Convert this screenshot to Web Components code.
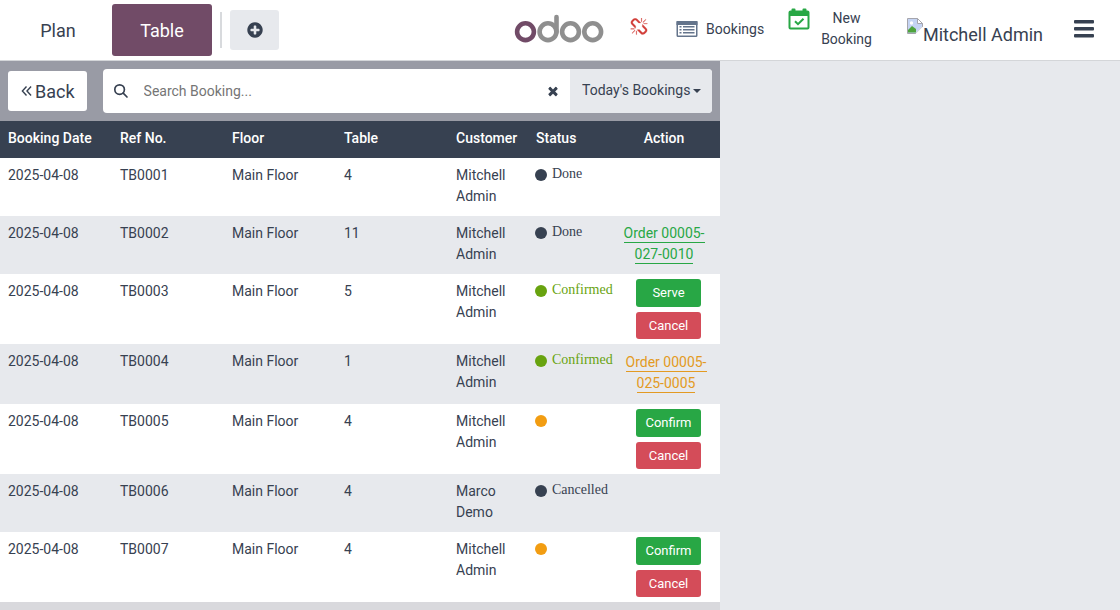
<!DOCTYPE html>
<html lang="en">
<head>
  <meta charset="utf-8">
  <meta name="viewport" content="width=device-width, initial-scale=1">
  <title>Table Bookings</title>
  <style>
    :root {
      --ink: #374151;
      --muted-bg: #e7e9ed;
      --brand: #714b67;
      --success: #28a745;
      --danger: #d44c59;
      --warning: #f29d12;
      --confirmed: #68a30f;
    }
    body {
      margin: 0;
      min-height: 100vh;
      font-family: Roboto, "Liberation Sans", sans-serif;
      font-size: 14px;
      line-height: 21px;
      color: var(--ink);
      background-color: var(--muted-bg);
    }
  </style>
</head>
<body>
  <booking-app></booking-app>

  <script>
    const icons = {
      plus: ['0 0 1792 1792', '<path d="M1344 960v-128q0-26-19-45t-45-19h-256v-256q0-26-19-45t-45-19h-128q-26 0-45 19t-19 45v256h-256q-26 0-45 19t-19 45v128q0 26 19 45t45 19h256v256q0 26 19 45t45 19h128q26 0 45-19t19-45v-256h256q26 0 45-19t19-45zM1664 896q0 209-103 385.5t-279.5 279.5-385.5 103-385.5-103-279.5-279.5-103-385.5 103-385.5 279.5-279.5 385.5-103 385.5 103 279.5 279.5 103 385.5z"/>'],
      times: ['0 0 1792 1792', '<path d="M1490 1322q0 40-28 68l-136 136q-28 28-68 28t-68-28l-294-294-294 294q-28 28-68 28t-68-28l-136-136q-28-28-28-68t28-68l294-294-294-294q-28-28-28-68t28-68l136-136q28-28 68-28t68 28l294 294 294-294q28-28 68-28t68 28l136 136q28 28 28 68t-28 68l-294 294 294 294q28 28 28 68z"/>'],
      unlink: ['0 0 1792 1792', '<path d="M503 1271l-256 256q-10 9-23 9-12 0-23-9-9-10-9-23t9-23l256-256q10-9 23-9t23 9q9 10 9 23t-9 23zm169 41v320q0 14-9 23t-23 9-23-9-9-23v-320q0-14 9-23t23-9 23 9 9 23zm-224-224q0 14-9 23t-23 9h-320q-14 0-23-9t-9-23 9-23 23-9h320q14 0 23 9t9 23zm1264 128q0 120-85 203l-147 146q-83 83-203 83-121 0-204-85l-334-335q-21-21-42-56l239-18 273 274q28 28 68 27.5t68-27.5l147-146q28-28 28-67 0-40-28-68l-274-275 18-239q35 21 56 42l336 336q84 86 84 204zm-617-724l-239 18-273-274q-28-28-68-28-39 0-68 27l-147 146q-28 28-28 67 0 40 28 68l274 274-18 240q-35-21-56-42l-336-336q-84-86-84-204 0-120 85-203l147-146q83-83 203-83 121 0 204 85l334 335q21 21 42 56zm633 84q0 14-9 23t-23 9h-320q-14 0-23-9t-9-23 9-23 23-9h320q14 0 23 9t9 23zm-544-544v320q0 14-9 23t-23 9-23-9-9-23v-320q0-14 9-23t23-9 23 9 9 23zm407 151l-256 256q-11 9-23 9t-23-9q-9-10-9-23t9-23l256-256q10-9 23-9t23 9q9 10 9 23t-9 23z" stroke="currentColor" stroke-width="20"/>'],
      search: ['0 0 16 16', '<g fill="none" stroke="currentColor" stroke-width="1.700" stroke-linecap="round"><circle cx="6.600" cy="6.600" r="4.800"/><path d="M10.200 10.200L14 14"/></g>'],
      back: ['0 0 12 12', '<path d="M6 1L1.500 6L6 11M11 1L6.500 6L11 11" fill="none" stroke="currentColor" stroke-width="1.500"/>'],
      bars: ['0 0 20 18', '<rect width="20" height="3.400" rx="1"/><rect y="7" width="20" height="3.400" rx="1"/><rect y="14" width="20" height="3.400" rx="1"/>'],
      list: ['0 0 22 18', '<path fill-rule="evenodd" d="M2 1h18a1.500 1.500 0 0 1 1.500 1.500v13a1.500 1.500 0 0 1-1.500 1.500h-18a1.500 1.500 0 0 1-1.500-1.500v-13a1.500 1.500 0 0 1 1.500-1.500zM2 5v10.500h18V5z"/><path d="M.5 1h21v4h-21zM3.500 6h2v1.500h-2zM7 6h11.500v1.500H7zM3.500 9h2v1.500h-2zM7 9h11.500v1.500H7zM3.500 12h2v1.500h-2zM7 12h11.500v1.500H7z"/>'],
      calendar: ['0 0 22 22', '<path fill-rule="evenodd" d="M2.500 2.500h1V1.500a1 1 0 0 1 1-1h2a1 1 0 0 1 1 1v1h7v-1a1 1 0 0 1 1-1h2a1 1 0 0 1 1 1v1h1a2 2 0 0 1 2 2v15a2 2 0 0 1-2 2h-17a2 2 0 0 1-2-2v-15a2 2 0 0 1 2-2zM2.500 8v11.500h17V8z"/><path d="M7 13.200l3 3 5.500-5.500" fill="none" stroke="currentColor" stroke-width="2"/>'],
      caret: ['0 0 8 4', '<path d="M0 0h8L4 4z"/>'],
      broken: ['0 0 16 16', '<path d="M.5 .5h10l5 5V9L9 15.500H.5z" fill="#fff" stroke="#a5a5ad"/><path d="M1 1h9.500v4.500H15v3L8.500 15H1z" fill="#c5d4f3"/><path d="M1 14.500V12l4-4 4 3v3.500z" fill="#4fa33c"/><circle cx="4.500" cy="5" r="1.700" fill="#fff"/><path d="M10.500 .5v5h5z" fill="#fff" stroke="#a5a5ad"/><path d="M16 8.500L8.500 16H16z" fill="#fff"/>'],
      odoo: ['0 0 90 30', '<g fill="none" stroke="#8f8f8f" stroke-width="4.600"><circle cx="11.500" cy="17.700" r="8.400" stroke="#714b67"/><circle cx="34" cy="17.700" r="8.400"/><path d="M42.500 18V3" stroke-linecap="round"/><circle cx="56.500" cy="17.700" r="8.400"/><circle cx="78.700" cy="17.700" r="8.400"/></g>']
    };

    class UiIcon extends HTMLElement {
      constructor() {
        super();
        this.attachShadow({ mode: 'open' });
      }

      connectedCallback() {
        const [viewBox, shapes] = icons[this.getAttribute('name')];
        this.shadowRoot.innerHTML = `
          <style>
            :host {
              display: inline-block;
              flex: none;
              width: 16px;
              height: 16px;
            }
            svg {
              display: block;
              width: 100%;
              height: 100%;
              fill: currentColor;
            }
          </style>
          <svg viewBox="${viewBox}" aria-hidden="true">${shapes}</svg>
        `;
      }
    }

    class AppHeader extends HTMLElement {
      constructor() {
        super();
        this.attachShadow({ mode: 'open' });
      }

      connectedCallback() {
        this.shadowRoot.innerHTML = `
          <style>
            :host {
              display: block;
              background-color: #fff;
              border-bottom: 1px solid #d4d6d9;
            }
            header, nav, .right, .item {
              display: flex;
              align-items: center;
            }
            header {
              justify-content: space-between;
              height: 60px;
              padding: 0 26px 0 8px;
            }
            nav {
              gap: 4px;
            }
            .right {
              padding-bottom: 2px;
            }
            button {
              display: flex;
              align-items: center;
              justify-content: center;
              padding: 0;
              border: none;
              border-radius: 3px;
              font: inherit;
              color: inherit;
              background: none;
              cursor: pointer;
            }
            .tab {
              width: 100px;
              height: 52px;
              font-size: 18px;
            }
            .tab.active {
              color: #fff;
              background-color: var(--brand);
            }
            .divider {
              width: 2px;
              height: 36px;
              margin: 0 4px;
              background-color: #d8dadd;
            }
            .add {
              width: 49px;
              height: 40px;
              background-color: var(--muted-bg);
            }
            .add ui-icon {
              width: 18px;
              height: 18px;
            }
            .logo {
              width: 90px;
              height: 30px;
              margin-right: 26px;
            }
            .unlink {
              width: 18px;
              height: 18px;
              margin: 0 28px 4px 0;
              color: #d23f3a;
            }
            .item {
              gap: 8px;
              margin-right: 24px;
              font-size: 14px;
            }
            .item.list ui-icon {
              width: 22px;
              height: 18px;
              color: #64748b;
            }
            .item.new {
              align-items: flex-start;
              gap: 11px;
              margin-right: 35px;
            }
            .item.new span {
              width: min-content;
            }
            .item.new ui-icon {
              width: 22px;
              height: 22px;
              color: var(--success);
            }
            .user {
              display: flex;
              margin: 10px 31px 0 0;
              font-size: 18px;
            }
            .user ui-icon {
              margin-top: -6px;
            }
            .menu ui-icon {
              width: 20px;
              height: 18px;
            }
          </style>
          <header>
            <nav>
              <button class="tab">Plan</button>
              <button class="tab active">Table</button>
              <span class="divider"></span>
              <button class="add" aria-label="Add"><ui-icon name="plus"></ui-icon></button>
            </nav>
            <div class="right">
              <ui-icon class="logo" name="odoo"></ui-icon>
              <ui-icon class="unlink" name="unlink"></ui-icon>
              <button class="item list"><ui-icon name="list"></ui-icon>Bookings</button>
              <button class="item new"><ui-icon name="calendar"></ui-icon><span>New Booking</span></button>
              <span class="user"><ui-icon name="broken"></ui-icon>Mitchell Admin</span>
              <button class="menu" aria-label="Menu"><ui-icon name="bars"></ui-icon></button>
            </div>
          </header>
        `;
      }
    }

    class SearchBar extends HTMLElement {
      constructor() {
        super();
        this.attachShadow({ mode: 'open' });
      }

      connectedCallback() {
        this.render();
        const input = this.shadowRoot.querySelector('input');
        this.shadowRoot.querySelector('.clear').addEventListener('click', () => {
          input.value = '';
          input.focus();
        });
      }

      render() {
        this.shadowRoot.innerHTML = `
          <style>
            :host {
              display: flex;
              align-items: center;
              gap: 16px;
              padding: 8px;
              background-color: #999ba5;
            }
            button, input, select {
              border: none;
              font: inherit;
              color: inherit;
              background: none;
            }
            .back {
              display: flex;
              align-items: center;
              gap: 3px;
              height: 40px;
              padding: 0 12px 0 13px;
              border-radius: 3px;
              font-size: 18px;
              background-color: #fff;
            }
            .back ui-icon {
              width: 11px;
              height: 12px;
            }
            .box {
              display: flex;
              flex: 1;
              align-items: center;
              height: 44px;
              border-radius: 4px;
              overflow: hidden;
              background-color: #fff;
            }
            label {
              display: flex;
              padding: 0 15px 0 10px;
            }
            input {
              flex: 1;
              min-width: 0;
              height: 100%;
              padding: 0;
              outline: none;
            }
            input::placeholder {
              color: #757575;
            }
            .clear {
              display: flex;
              padding: 0 10px;
            }
            .clear ui-icon {
              width: 14px;
              height: 14px;
            }
            .filter {
              position: relative;
              height: 100%;
              background-color: var(--muted-bg);
            }
            select {
              appearance: none;
              height: 100%;
              padding: 0 21px 2px 12px;
            }
            .filter ui-icon {
              position: absolute;
              top: 20px;
              right: 11px;
              width: 8px;
              height: 4px;
              pointer-events: none;
            }
          </style>
          <button class="back"><ui-icon name="back"></ui-icon>Back</button>
          <div class="box">
            <label for="search"><ui-icon name="search"></ui-icon></label>
            <input id="search" type="text" placeholder="Search Booking..." aria-label="Search Booking">
            <button class="clear" aria-label="Clear"><ui-icon name="times"></ui-icon></button>
            <div class="filter">
              <select aria-label="Filter bookings">
                <option>Today's Bookings</option>
                <option>All Bookings</option>
              </select>
              <ui-icon name="caret"></ui-icon>
            </div>
          </div>
        `;
      }
    }

    class BookingStatus extends HTMLElement {
      constructor() {
        super();
        this.attachShadow({ mode: 'open' });
      }

      connectedCallback() {
        this.shadowRoot.innerHTML = `
          <style>
            :host {
              display: flex;
              align-items: center;
              gap: 5px;
              height: 18px;
              margin: 1px 0 0 -1px;
              font-family: "Liberation Serif", serif;
              line-height: 15px;
              white-space: nowrap;
              color: var(--ink);
            }
            :host([state="confirmed"]) {
              color: var(--confirmed);
            }
            :host([state="pending"]) {
              color: var(--warning);
            }
            .dot {
              flex: none;
              width: 12px;
              height: 12px;
              border-radius: 50%;
              background-color: currentColor;
            }
            .text {
              align-self: flex-start;
            }
          </style>
          <span class="dot"></span><span class="text"><slot></slot></span>
        `;
      }
    }

    class BookingActions extends HTMLElement {
      constructor() {
        super();
        this.attachShadow({ mode: 'open' });
      }

      connectedCallback() {
        this.shadowRoot.innerHTML = `
          <style>
            :host {
              display: flex;
              flex-direction: column;
              gap: 5px;
              width: 65px;
              margin: -2px 11px -4px auto;
            }
            button {
              height: 28px;
              padding: 0 0 1px;
              border: none;
              border-radius: 3px;
              font: inherit;
              font-size: 13px;
              color: #fff;
              background-color: var(--success);
              cursor: pointer;
            }
            .cancel {
              height: 27px;
              background-color: var(--danger);
            }
          </style>
          <button><slot></slot></button>
          <button class="cancel">Cancel</button>
        `;
      }
    }

    const bookings = [
      { ref: 'TB0001', table: '4', customer: 'Mitchell Admin', state: 'done', status: 'Done' },
      { ref: 'TB0002', table: '11', customer: 'Mitchell Admin', state: 'done', status: 'Done', order: 'Order 00005-027-0010' },
      { ref: 'TB0003', table: '5', customer: 'Mitchell Admin', state: 'confirmed', status: 'Confirmed', action: 'Serve' },
      { ref: 'TB0004', table: '1', customer: 'Mitchell Admin', state: 'confirmed', status: 'Confirmed', order: 'Order 00005-025-0005', open: true },
      { ref: 'TB0005', table: '4', customer: 'Mitchell Admin', state: 'pending', status: '', action: 'Confirm' },
      { ref: 'TB0006', table: '4', customer: 'Marco Demo', state: 'done', status: 'Cancelled' },
      { ref: 'TB0007', table: '4', customer: 'Mitchell Admin', state: 'pending', status: '', action: 'Confirm' }
    ];

    class BookingTable extends HTMLElement {
      constructor() {
        super();
        this.attachShadow({ mode: 'open' });
      }

      connectedCallback() {
        this.render();
      }

      action(booking) {
        if (booking.order) {
          return `<a href="#" class="${booking.open ? 'open' : ''}">${booking.order}</a>`;
        }
        if (booking.action) {
          return `<booking-actions>${booking.action}</booking-actions>`;
        }
        return '';
      }

      row(booking) {
        return `
          <tr>
            <td>2025-04-08</td>
            <td>${booking.ref}</td>
            <td>Main Floor</td>
            <td>${booking.table}</td>
            <td>${booking.customer}</td>
            <td><booking-status state="${booking.state}">${booking.status}</booking-status></td>
            <td class="action ${booking.open ? 'unpaid' : ''}">${this.action(booking)}</td>
          </tr>
        `;
      }

      render() {
        this.shadowRoot.innerHTML = `
          <style>
            :host {
              display: block;
            }
            table {
              width: 100%;
              table-layout: fixed;
              border-collapse: collapse;
            }
            th, td {
              box-sizing: border-box;
              padding: 7px 8px 9px;
              text-align: left;
              vertical-align: top;
            }
            .narrow {
              width: 80px;
            }
            th {
              padding-right: 0;
              font-weight: 500;
              color: #fff;
              background-color: var(--ink);
            }
            th.action {
              padding-left: 0;
            }
            tbody tr {
              background-color: #fff;
            }
            tbody tr:nth-child(even) {
              background-color: var(--muted-bg);
            }
            .action {
              text-align: center;
            }
            .unpaid {
              padding: 8px 6px 10px 10px;
            }
            a {
              padding-bottom: 1px;
              color: var(--success);
              text-decoration: none;
              border-bottom: 1px solid;
            }
            a.open {
              color: #e39a22;
            }
          </style>
          <table>
            <thead>
              <tr>
                <th>Booking Date</th>
                <th>Ref No.</th>
                <th>Floor</th>
                <th>Table</th>
                <th class="narrow">Customer</th>
                <th class="narrow">Status</th>
                <th class="action">Action</th>
              </tr>
            </thead>
            <tbody>${bookings.map(booking => this.row(booking)).join('')}</tbody>
          </table>
        `;
      }
    }

    class BookingApp extends HTMLElement {
      constructor() {
        super();
        this.attachShadow({ mode: 'open' });
      }

      connectedCallback() {
        this.shadowRoot.innerHTML = `
          <style>
            :host {
              display: flex;
              flex-direction: column;
              min-height: 100vh;
            }
            main {
              display: grid;
              grid-template-columns: 9fr 5fr;
              flex: 1;
            }
            .bookings {
              background-color: #d9d9dd;
            }
          </style>
          <app-header></app-header>
          <main>
            <section class="bookings">
              <search-bar></search-bar>
              <booking-table></booking-table>
            </section>
          </main>
        `;
      }
    }

    customElements.define('ui-icon', UiIcon);
    customElements.define('app-header', AppHeader);
    customElements.define('search-bar', SearchBar);
    customElements.define('booking-status', BookingStatus);
    customElements.define('booking-actions', BookingActions);
    customElements.define('booking-table', BookingTable);
    customElements.define('booking-app', BookingApp);
  </script>
</body>
</html>
